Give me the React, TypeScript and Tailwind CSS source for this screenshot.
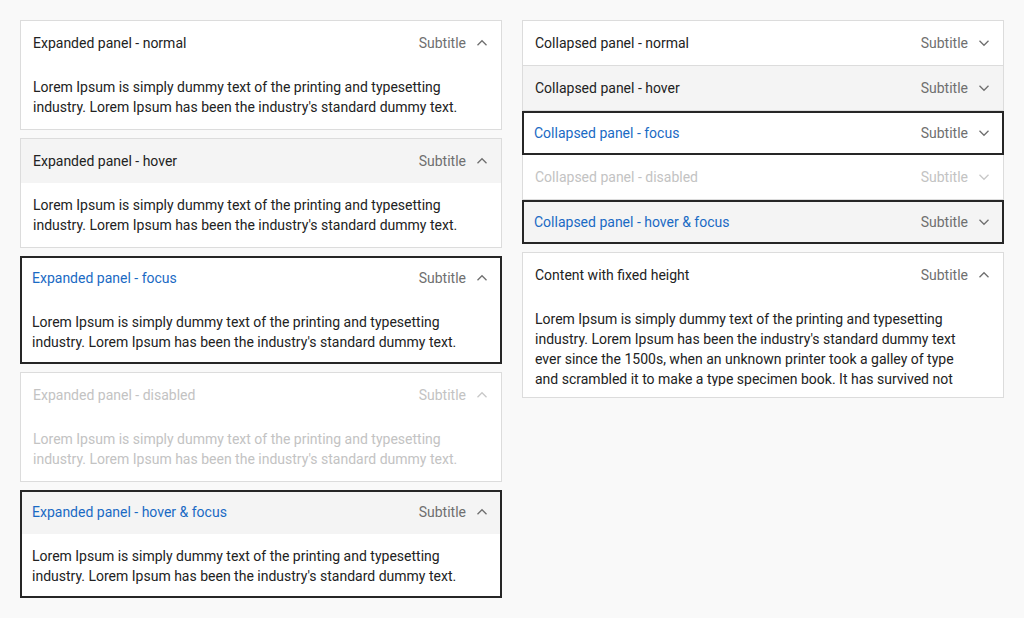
import React, { FC } from "react";

type State = "normal" | "hover" | "focus" | "disabled" | "hoverFocus";

const shortText =
  "Lorem Ipsum is simply dummy text of the printing and typesetting industry. Lorem Ipsum has been the industry's standard dummy text.";

const longText =
  "Lorem Ipsum is simply dummy text of the printing and typesetting industry. Lorem Ipsum has been the industry's standard dummy text ever since the 1500s, when an unknown printer took a galley of type and scrambled it to make a type specimen book. It has survived not only five centuries, but also the leap into electronic typesetting, remaining essentially unchanged.";

const Chevron: FC<{ up?: boolean; disabled?: boolean }> = ({ up, disabled }) => (
  <svg
    width="16"
    height="16"
    viewBox="0 0 16 16"
    fill="none"
    className={disabled ? "ml-2 shrink-0 text-[#c8c8c8]" : "ml-2 shrink-0 text-[#6f6f6f]"}
  >
    <path
      d={up ? "M3.5 10.25L8 5.75L12.5 10.25" : "M3.5 5.75L8 10.25L12.5 5.75"}
      stroke="currentColor"
      strokeWidth="1.3"
    />
  </svg>
);

const titleColor = (state: State) =>
  state === "disabled"
    ? "text-[#c3c3c3]"
    : state === "focus" || state === "hoverFocus"
    ? "text-[#1a6ac4]"
    : "text-[#222222]";

const HeaderRow: FC<{ title: string; state: State; up?: boolean; className: string }> = ({
  title,
  state,
  up,
  className,
}) => (
  <div className={"flex items-center " + className}>
    <span className={"flex-1 truncate " + titleColor(state)}>{title}</span>
    <span className={state === "disabled" ? "text-[#c3c3c3]" : "text-[#6f6f6f]"}>Subtitle</span>
    <Chevron up={up} disabled={state === "disabled"} />
  </div>
);

const ExpandedPanel: FC<{ title: string; state: State }> = ({ title, state }) => {
  const focused = state === "focus" || state === "hoverFocus";
  const hovered = state === "hover" || state === "hoverFocus";

  return (
    <div
      className={
        focused ? "bg-white border-2 border-[#262626]" : "bg-white border border-[#dcdcdc]"
      }
    >
      <HeaderRow
        title={title}
        state={state}
        up
        className={
          (focused ? "h-[42px] pl-[10px] pr-[10px] pb-[2px] " : "h-[44px] pl-3 pr-[11px] ") +
          (hovered ? "bg-[#f4f4f4]" : "")
        }
      />
      <p
        className={
          (focused ? "px-[10px] pt-3 pb-[10px] " : "px-3 pt-3 pb-3 ") +
          (state === "disabled" ? "text-[#c3c3c3]" : "text-[#222222]")
        }
      >
        {shortText}
      </p>
    </div>
  );
};

// collapsed rows are stacked, so each one gets its own border classes
const rows: { title: string; state: State; box: string }[] = [
  { title: "Collapsed panel - normal", state: "normal", box: "h-[46px] border border-[#dcdcdc] pl-3 pr-[11px]" },
  { title: "Collapsed panel - hover", state: "hover", box: "h-[45px] border-x border-b border-[#dcdcdc] bg-[#f4f4f4] pl-3 pr-[11px]" },
  { title: "Collapsed panel - focus", state: "focus", box: "h-[44px] border-2 border-[#262626] pl-[10px] pr-[10px]" },
  { title: "Collapsed panel - disabled", state: "disabled", box: "h-[45px] border-x border-b border-[#dcdcdc] pl-3 pr-[11px]" },
  { title: "Collapsed panel - hover & focus", state: "hoverFocus", box: "h-[44px] border-2 border-[#262626] bg-[#f4f4f4] pl-[10px] pr-[10px]" },
];

const App: FC = (): JSX.Element => {
  return (
    <div className="min-h-screen bg-[#f9f9f9] p-5 text-sm leading-5 font-['Roboto',sans-serif]">
      <div className="grid grid-cols-2 gap-5 items-start">
        {/* left column */}
        <div className="flex flex-col gap-2">
          <ExpandedPanel title="Expanded panel - normal" state="normal" />
          <ExpandedPanel title="Expanded panel - hover" state="hover" />
          <ExpandedPanel title="Expanded panel - focus" state="focus" />
          <ExpandedPanel title="Expanded panel - disabled" state="disabled" />
          <ExpandedPanel title="Expanded panel - hover & focus" state="hoverFocus" />
        </div>

        {/* right column */}
        <div className="flex flex-col">
          <div className="bg-white flex flex-col">
            {rows.map((row, index) => (
              <HeaderRow key={index} title={row.title} state={row.state} className={row.box} />
            ))}
          </div>

          <div className="mt-2 bg-white border border-[#dcdcdc]">
            <HeaderRow title="Content with fixed height" state="normal" up className="h-[44px] pl-3 pr-[11px]" />
            <div className="pl-3 pr-10 pt-3 pb-[11px]">
              <p className="h-[77px] overflow-hidden text-[#222222]">{longText}</p>
            </div>
          </div>
        </div>
      </div>
    </div>
  );
};

export default App;
